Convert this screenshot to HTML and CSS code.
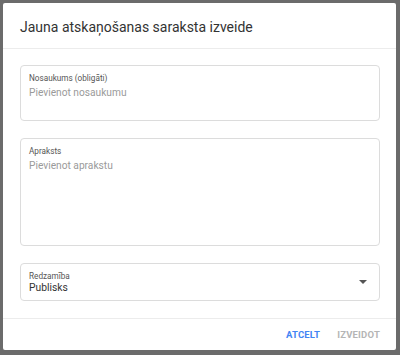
FILE: index.html
```html
<!DOCTYPE html>
<html>
<head>
<meta charset="utf-8">
<link rel="stylesheet" href="styles.css">
</head>
<body>
<div class="backdrop">
  <div class="dialog">
    <div class="header">Jauna atskaņošanas saraksta izveide</div>
    <div class="content">
      <div class="field field-title">
        <div class="label">Nosaukums (obligāti)</div>
        <div class="placeholder">Pievienot nosaukumu</div>
      </div>
      <div class="field field-desc">
        <div class="label">Apraksts</div>
        <div class="placeholder">Pievienot aprakstu</div>
      </div>
      <div class="field field-select">
        <div class="select-text">
          <div class="label">Redzamība</div>
          <div class="value">Publisks</div>
        </div>
        <svg class="caret" width="8" height="4" viewBox="0 0 8 4"><path d="M0 0 L8 0 L4 4 Z" fill="#555"/></svg>
      </div>
    </div>
    <div class="footer">
      <span class="btn btn-cancel">ATCELT</span>
      <span class="btn btn-create">IZVEIDOT</span>
    </div>
  </div>
</div>
</body>
</html>
```
FILE: styles.css
```css
html, body {
  margin: 0;
  padding: 0;
  width: 400px;
  height: 355px;
  overflow: hidden;
  font-family: Roboto, "Liberation Sans", sans-serif;
}
.backdrop {
  width: 400px;
  height: 355px;
  background: #6b6b6b;
  padding: 3px 4px 5px 3px;
  box-sizing: border-box;
}
.dialog {
  background: #fff;
  height: 100%;
  border-radius: 2px;
  display: flex;
  flex-direction: column;
}
.header {
  height: 46px;
  padding: 2px 17px 0 17px;
  display: flex;
  align-items: center;
  font-size: 14px;
  color: #333;
  border-bottom: 1px solid #ececec;
  box-sizing: border-box;
}
.content {
  padding: 16px 16px 17px 17px;
  display: flex;
  flex-direction: column;
  gap: 17px;
  border-bottom: 1px solid #ececec;
}
.field {
  border: 1px solid #dcdcdc;
  border-radius: 4px;
  padding: 7px 8px 0 8px;
  box-sizing: border-box;
}
.field-title { height: 56px; }
.field-desc { height: 108px; }
.field-select {
  height: 38px;
  display: flex;
  justify-content: space-between;
  padding-right: 12px;
}
.field-select .caret {
  align-self: center;
  margin-top: -7px;
}
.label {
  font-size: 8.2px;
  color: #555;
  line-height: 10px;
}
.placeholder {
  font-size: 10.2px;
  color: #9a9a9a;
  margin-top: 4px;
  line-height: 12px;
}
.value {
  font-size: 10.3px;
  color: #333;
  line-height: 12px;
  margin-top: 1px;
}
.caret { display: block; }
.footer {
  flex: 1;
  display: flex;
  justify-content: flex-end;
  align-items: center;
  gap: 17px;
  padding: 0 16px 0 0;
}
.btn {
  font-size: 9.5px;
  font-weight: 700;
  letter-spacing: 0.2px;
}
.btn-cancel { color: #4285f4; }
.btn-create { color: #b5b5b5; }
```
